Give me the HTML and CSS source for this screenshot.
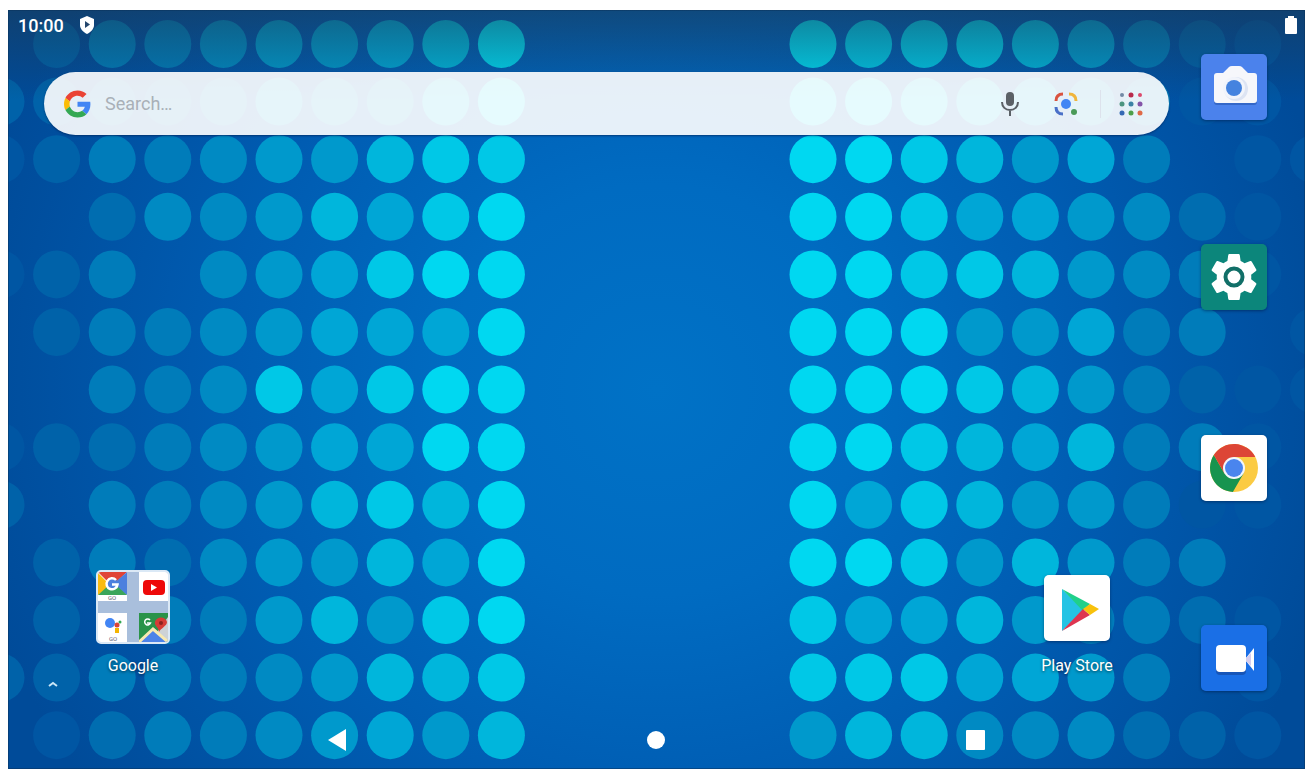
FILE: index.html
```html
<!DOCTYPE html>
<html lang="en">
<head>
    <meta charset="UTF-8">
    <title>Home screen</title>
    <link rel="stylesheet" href="styles.css">
</head>
<body>
    <div class="screen">
        <svg class="wallpaper" id="wallpaper" viewBox="0 0 1297 759" preserveAspectRatio="none" aria-hidden="true"></svg>

        <div class="status-bar">
            <span class="clock">10:00</span>
            <svg class="shield" viewBox="0 0 14 18"><path d="M7 0l7 3v6c0 4-3 7-7 9-4-2-7-5-7-9V3z" fill="#fff"/><path d="M5 5l5 3.500-5 3.500z" fill="#24466c"/></svg>
            <svg class="battery" viewBox="0 0 12 18"><path d="M3 2V0h6v2h2q1 0 1 1v14q0 1-1 1H1q-1 0-1-1V3q0-1 1-1z" fill="#fff"/></svg>
        </div>

        <div class="home">
            <div class="workspace">
                <form class="search-bar">
                    <svg class="g-logo" viewBox="0 0 48 48">
                        <path fill="#ea4335" d="M24 9.500c3.540 0 6.710 1.220 9.210 3.600l6.850-6.850C35.900 2.380 30.470 0 24 0 14.620 0 6.510 5.380 2.560 13.220l7.980 6.190C12.430 13.720 17.740 9.500 24 9.500z"/>
                        <path fill="#4285f4" d="M46.980 24.550c0-1.570-.15-3.090-.38-4.550H24v9.020h12.940c-.58 2.960-2.260 5.480-4.780 7.180l7.730 6c4.510-4.180 7.090-10.360 7.090-17.650z"/>
                        <path fill="#fbbc05" d="M10.530 28.590c-.48-1.450-.76-2.990-.76-4.590s.27-3.140.76-4.590l-7.980-6.190C.92 16.460 0 20.120 0 24c0 3.880.92 7.540 2.560 10.780l7.970-6.190z"/>
                        <path fill="#34a853" d="M24 48c6.480 0 11.930-2.130 15.890-5.810l-7.730-6c-2.150 1.450-4.920 2.300-8.160 2.300-6.260 0-11.570-4.220-13.470-9.910l-7.980 6.190C6.510 42.620 14.620 48 24 48z"/>
                    </svg>
                    <input class="search-input" type="text" placeholder="Search…" aria-label="Search">
                    <button class="tool" type="button" aria-label="Voice search">
                        <svg viewBox="0 0 24 28"><rect x="8" y="2" width="8" height="14" rx="4" fill="#5b6066"/><path d="M4 12c0 5 3.500 8 8 8s8-3 8-8M12 20v6" fill="none" stroke="#5b6066" stroke-width="2"/></svg>
                    </button>
                    <button class="tool" type="button" aria-label="Lens">
                        <svg viewBox="0 0 24 28">
                            <g fill="none" stroke-width="3">
                                <path d="M2 11q0-7 7-7" stroke="#d9533f"/>
                                <path d="M15 4q7 0 7 7" stroke="#f0b53c"/>
                                <path d="M2 17q0 7 7 7" stroke="#4a70c8"/>
                            </g>
                            <circle cx="12" cy="14" r="5" fill="#4285f4"/><circle cx="20" cy="22" r="3" fill="#4a9a58"/>
                        </svg>
                    </button>
                    <button class="tool apps-button" type="button" aria-label="All apps">
                        <svg viewBox="0 0 24 28">
                            <circle cx="3" cy="5" r="2" fill="#7289a5"/><circle cx="12" cy="5" r="2.500" fill="#b92a4b"/><circle cx="21" cy="5" r="2" fill="#dc4a6c"/>
                            <circle cx="3" cy="14" r="2.500" fill="#4c9580"/><circle cx="12" cy="14" r="2.500" fill="#3b83a5"/><circle cx="21" cy="14" r="2.500" fill="#8455a8"/>
                            <circle cx="3" cy="23" r="2.500" fill="#3569b4"/><circle cx="12" cy="23" r="2.500" fill="#4da04a"/><circle cx="21" cy="23" r="2.500" fill="#df6a48"/>
                        </svg>
                    </button>
                </form>

                <div class="apps">
                    <button class="app" type="button">
                        <span class="folder">
                            <svg viewBox="0 0 29 29">
                                <path d="M0 0h29v29H0z" fill="#fff"/>
                                <path d="M0 0h29L14 14z" fill="#e04436"/><path d="M0 1l13 13L0 23z" fill="#f9bb12"/>
                                <path d="M29 0v23L14 13z" fill="#4c80de"/><path d="M0 23l10-9h9l10 9z" fill="#3ba55a"/>
                                <circle cx="14" cy="12" r="6" fill="#4c80de"/>
                                <path d="M18 8a5.500 5.500 0 1 0 1.500 4.500H14" fill="none" stroke="#fff" stroke-width="2.500"/>
                                <text x="14" y="28" class="tile-text">GO</text>
                            </svg>
                            <svg viewBox="0 0 29 29">
                                <path d="M0 0h29v29H0z" fill="#fff"/><rect x="4" y="8" width="22" height="15" rx="4" fill="#ee0909"/><path d="M12 12l6 3.500-6 3.500z" fill="#fff"/>
                            </svg>
                            <svg viewBox="0 0 29 29">
                                <path d="M0 0h29v29H0z" fill="#fff"/><circle cx="12" cy="10" r="5" fill="#4285f4"/><circle cx="19" cy="12" r="2.500" fill="#db4437"/>
                                <circle cx="22" cy="9" r="1.500" fill="#34a853"/><path d="M17 15h4v5h-4z" fill="#f4b400"/>
                                <text x="15" y="28" class="tile-text">GO</text>
                            </svg>
                            <svg viewBox="0 0 29 29">
                                <path d="M0 0h29v29H0z" fill="#2a9349"/><path d="M29 4v25H11z" fill="#cdd2d6"/><path d="M0 29l15-14 14 14" fill="#4c83e8"/>
                                <path d="M0 29l14-13 15 13" fill="none" stroke="#f7e9b0" stroke-width="3"/><path d="M20 19c0-5-5-6-4-10 1-6 11-6 12 0 0 4-6 6-8 10z" fill="#d63c36"/><circle cx="22" cy="10" r="2" fill="#8a201f"/>
                                <path d="M11 7a3 3 0 1 0 .5 3H8" fill="none" stroke="#fff" stroke-width="1.500"/>
                            </svg>
                        </span>
                        <span class="app-name">Google</span>
                    </button>
                    <button class="app" type="button">
                        <svg class="icon" viewBox="0 0 66 66">
                            <path d="M0 0h66v66H0z" fill="#fff"/>
                            <path d="M18 14v42l22-21z" fill="#25c3e4"/><path d="M18 14l28 15-7 7z" fill="#20d08a"/>
                            <path d="M18 56l28-16-7-6z" fill="#de3550"/><path d="M46 29l9 5-9 6-7-6z" fill="#f8c10c"/>
                        </svg>
                        <span class="app-name">Play Store</span>
                    </button>
                </div>
                <button class="drawer" type="button" aria-label="Open app drawer">
                    <svg viewBox="0 0 10 6"><path d="M1 5l4-3 4 3" fill="none" stroke="#c9e6f7" stroke-width="2"/></svg>
                </button>
            </div>

            <div class="dock">
                <button type="button" aria-label="Camera">
                    <svg class="icon" viewBox="0 0 66 66">
                        <path d="M0 0h66v66H0z" fill="#4b82ec"/>
                        <path d="M16 21h6l6-7q1-1 3-1h7q2 0 3 1l6 7h6q3 0 3 3v24q0 3-3 3H16q-3 0-3-3V24q0-3 3-3z" fill="#3467c8"/>
                        <path d="M16 19h6l6-6q1-1 3-1h7q2 0 3 1l6 6h6q3 0 3 3v24q0 3-3 3H16q-3 0-3-3V22q0-3 3-3z" fill="#f6f7fb"/>
                        <circle cx="35" cy="35" r="12" fill="#dde4f3"/><circle cx="33" cy="34" r="11" fill="#f1f4fb"/><circle cx="33" cy="34" r="8" fill="#4583df"/>
                    </svg>
                </button>
                <button type="button" aria-label="Settings">
                    <svg class="icon" viewBox="0 0 66 66">
                        <path d="M0 0h66v66H0z" fill="#0c867b"/>
                        <g transform="translate(4.200 4.200) scale(2.400)">
                            <path fill="#fff" d="M19.140 12.940c.04-.3.060-.61.060-.94 0-.32-.02-.64-.07-.94l2.030-1.580c.18-.14.230-.41.120-.61l-1.920-3.320c-.12-.22-.37-.29-.59-.22l-2.390.96c-.5-.38-1.030-.7-1.620-.94L14.400 2.810c-.04-.24-.24-.41-.48-.41h-3.840c-.24 0-.43.17-.47.41L9.250 5.350c-.59.24-1.130.57-1.620.94l-2.390-.96c-.22-.08-.47 0-.59.22L2.740 8.870c-.12.21-.08.47.12.61l2.030 1.580c-.05.3-.09.63-.09.94s.02.64.07.94l-2.030 1.580c-.18.14-.23.41-.12.61l1.920 3.320c.12.22.37.29.59.22l2.390-.96c.5.380 1.030.7 1.620.94l.36 2.540c.05.24.24.41.48.41h3.840c.24 0 .44-.17.47-.41l.36-2.540c.59-.24 1.130-.56 1.620-.94l2.390.96c.22.080.47 0 .59-.22l1.920-3.320c.12-.22.070-.47-.12-.61z"/>
                        </g>
                        <circle cx="33" cy="33" r="8.500" fill="#fff" stroke="#116f68" stroke-width="4"/>
                    </svg>
                </button>
                <button type="button" aria-label="Chrome">
                    <svg class="icon" viewBox="0 0 66 66">
                        <path d="M0 0h66v66H0z" fill="#fff"/>
                        <g transform="translate(33 33)">
                            <circle r="24" fill="#fbcb43"/>
                            <path d="M-9.530 5.500L-20.180-12.950A24 24 0 0 0-1.120 23.950L9.530 5.500z" fill="#17944f"/>
                            <path d="M0-11H21.300A24 24 0 0 0-20.180-12.950L-9.530 5.500z" fill="#dd4536"/>
                            <circle r="11" fill="#f3f6fb"/><circle r="9" fill="#4a85ee"/>
                        </g>
                    </svg>
                </button>
                <button type="button" aria-label="Duo">
                    <svg class="icon" viewBox="0 0 66 66">
                        <path d="M0 0h66v66H0z" fill="#1a6fe6"/>
                        <rect x="15" y="22" width="30" height="28" rx="4" fill="#1655b8"/>
                        <path d="M45 33l8-10v23l-8-10z" fill="#fff"/><path d="M45 33l5-5v13l-5-5z" fill="#d5cdee"/>
                        <rect x="15" y="20" width="30" height="27" rx="4" fill="#fff"/>
                    </svg>
                </button>
            </div>
        </div>

        <div class="nav-bar">
            <button type="button" aria-label="Back"><svg viewBox="0 0 24 24"><path d="M3 12L21 1v22z" fill="#fff"/></svg></button>
            <button type="button" aria-label="Home"><svg viewBox="0 0 24 24"><circle cx="12" cy="12" r="9" fill="#fff"/></svg></button>
            <button type="button" aria-label="Recents"><svg viewBox="0 0 24 24"><rect x="2" y="2" width="19" height="20" rx="1" fill="#fff"/></svg></button>
        </div>
    </div>

    <script src="wallpaper.js"></script>
</body>
</html>
```

FILE: styles.css
```css
* {
    box-sizing: border-box;
}
body {
    margin: 0;
    padding: 10px 7px 4px 8px;
    min-height: 100vh;
    display: flex;
    background: #fff;
    font-family: Roboto, sans-serif;
    color: #fff;
}
button {
    padding: 0;
    border: none;
    background: none;
    color: inherit;
    font-family: inherit;
    cursor: pointer;
}
svg {
    display: block;
}
.screen {
    position: relative;
    flex: 1;
    display: flex;
    flex-direction: column;
    overflow: hidden;
    background: radial-gradient(ellipse 54% 90% at center, #0072c6 0%, #006bc1 30%, #005cb2 62%, #004b99 100%);
}
.screen::after {
    content: "";
    position: absolute;
    inset: 0;
    border: 1px solid rgba(10, 50, 90, 0.5);
    pointer-events: none;
}
.wallpaper {
    position: absolute;
    width: 100%;
    height: 100%;
}
.status-bar, .home, .nav-bar {
    position: relative;
}
.status-bar {
    display: flex;
    align-items: center;
    height: 30px;
    padding: 0 8px 0 10px;
    font-size: 18px;
    font-weight: 500;
}
.shield {
    width: 14px;
    height: 18px;
    margin-left: 16px;
}
.battery {
    width: 12px;
    height: 18px;
    margin-left: auto;
}

.home {
    flex: 1;
    display: flex;
    gap: 32px;
    padding: 14px 38px 20px 36px;
}
.workspace {
    flex: 1;
    display: flex;
    flex-direction: column;
}
.search-bar {
    display: flex;
    align-items: center;
    height: 63px;
    margin: 18px 0 0;
    padding: 0 20px;
    border-radius: 32px;
    background: rgba(255, 255, 255, 0.9);
    box-shadow: 0 1px 2px rgba(0, 30, 80, 0.6);
}
.g-logo {
    width: 27px;
    height: 28px;
}
.search-input {
    flex: 1;
    min-width: 0;
    margin-left: 14px;
    padding: 0;
    border: none;
    outline: none;
    background: none;
    font-family: inherit;
    font-size: 18px;
    color: #333;
}
.search-input::placeholder {
    color: #a9b0b7;
}
.tool {
    width: 24px;
    height: 28px;
    margin-left: 32px;
}
.apps-button {
    width: 49px;
    margin-left: 22px;
    padding-left: 18px;
    border-left: 1px solid #dde2ec;
}
.tool svg {
    width: 24px;
    height: 28px;
}
.apps {
    display: flex;
    align-items: flex-end;
    justify-content: space-between;
    margin-top: auto;
    padding: 0 47px 0 44px;
}
.app {
    display: flex;
    flex-direction: column;
    align-items: center;
    width: 90px;
}
.app .icon {
    margin-bottom: 3px;
}
.app-name {
    margin-top: 12px;
    font-size: 16px;
    line-height: 20px;
    text-shadow: 0 1px 3px rgba(0, 0, 0, 0.6);
}
.folder {
    display: grid;
    grid-template-columns: 29px 29px;
    gap: 12px;
    width: 74px;
    height: 74px;
    border: 2px solid #dbe9f6;
    border-radius: 5px;
    overflow: hidden;
    background: #a9bfdc;
}
.tile-text {
    font-size: 6px;
    text-anchor: middle;
    fill: #667;
}
.drawer {
    width: 10px;
    height: 6px;
    margin: 5px 0 4px 4px;
}
.icon {
    width: 66px;
    height: 66px;
    border-radius: 5px;
    box-shadow: 0 1px 3px rgba(0, 20, 60, 0.5);
}
.dock {
    display: flex;
    flex-direction: column;
    justify-content: space-between;
}

.nav-bar {
    display: grid;
    grid-template-columns: 1fr 1fr 1fr;
    justify-items: center;
    align-items: center;
    width: 74%;
    height: 58px;
    margin: 0 auto;
}
.nav-bar button {
    padding: 8px;
}
.nav-bar svg {
    width: 24px;
    height: 24px;
}
```

FILE: wallpaper.js
```js
// one digit per dot: 0 is no dot, a is the brightest
const leftRows = [
    '024456678a', '223346558a', '1244566899', '003556879a', '12405679aa',
    '024456777a', '00445979aa', '12345677aa', '204456898a', '024356687a',
    '020446869a', '2244456889', '0134456768'
];
const rightRows = [
    'a999864210', 'aa98754110', 'aa98674011', 'aa97765310', 'aa99865410',
    'aaa6674401', 'aaa9864211', 'aa98784410', 'a798664110', 'aa96864400',
    '9778644310', '9997764010', '6885553210'
];
const colors = {
    1: '#0056a3', 2: '#0062a9', 3: '#006db0', 4: '#007cba', 5: '#008ac3',
    6: '#0099cc', 7: '#00a6d6', 8: '#00b6dc', 9: '#00c8e7', a: '#00d8f1'
};

function drawDots(rows, startX) {
    let dots = '';
    rows.forEach((row, j) => {
        [...row].forEach((level, i) => {
            if (level === '0') return;
            dots += `<ellipse cx="${startX + i * 55.6}" cy="${34 + j * 57.6}" rx="23.5" ry="24" fill="${colors[level]}"/>`;
        });
    });
    return dots;
}

document.getElementById('wallpaper').innerHTML =
    '<defs><linearGradient id="shade" x2="0" y2="1"><stop stop-color="#1c3850" stop-opacity=".55"/><stop offset="1" stop-color="#1c3850" stop-opacity="0"/></linearGradient></defs>' +
    drawDots(leftRows, -7) +
    drawDots(rightRows, 805) +
    '<rect width="1297" height="90" fill="url(#shade)"/>';
```
